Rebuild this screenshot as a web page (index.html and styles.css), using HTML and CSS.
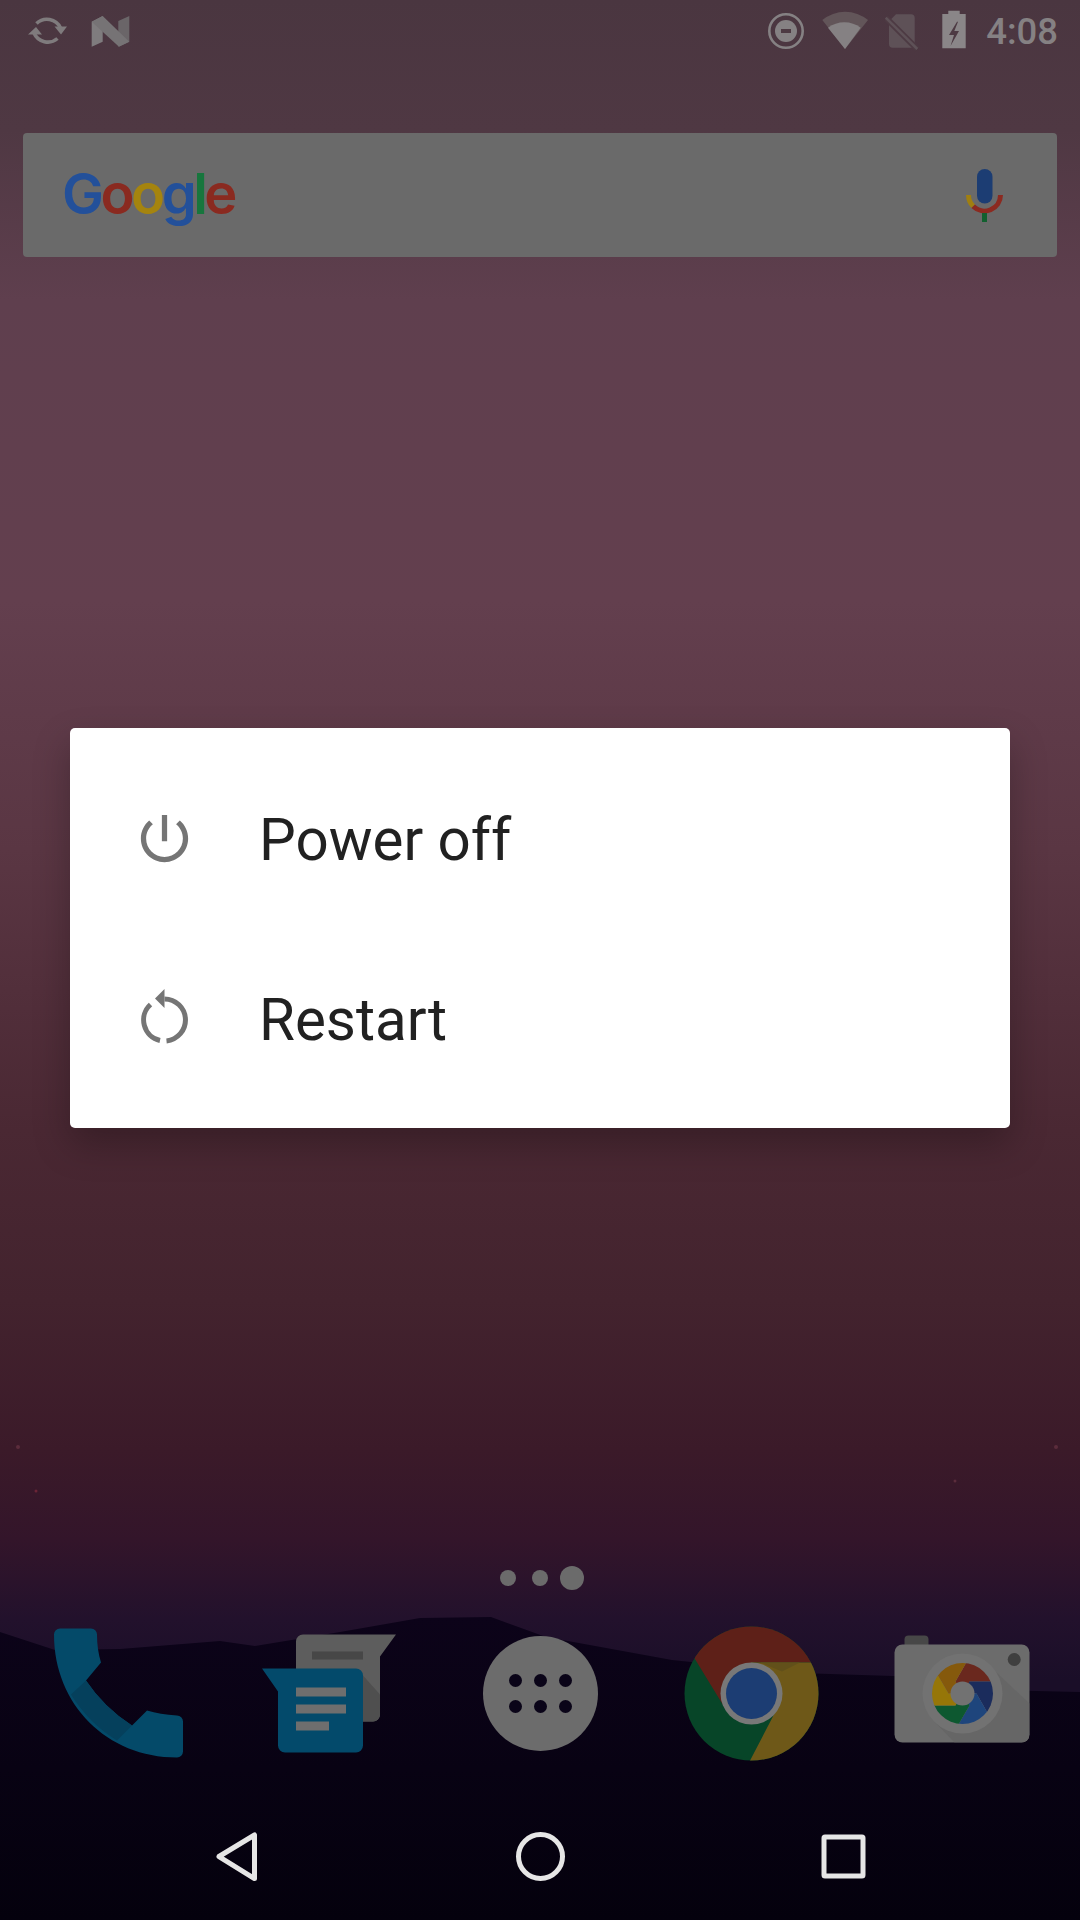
FILE: index.html
```html
<!DOCTYPE html>
<html lang="en">
<head>
    <meta charset="UTF-8">
    <title>Power menu</title>
    <link rel="stylesheet" href="styles.css">
</head>
<body>
    <div class="screen">
        <!-- wallpaper hills, behind everything -->
        <svg class="hills" viewBox="0 0 1080 1920">
            <path d="M0 1632L55 1650L120 1649L220 1641L255 1646L340 1632L420 1618L491 1617L546 1637L672 1660L799 1673L925 1677L1000 1690L1080 1692V1920H0Z" fill="url(#hillFade)"/>
            <defs>
                <linearGradient id="hillFade" x1="0" y1="0" x2="0" y2="1">
                    <stop offset="0" stop-color="#0c0319"/>
                    <stop offset="1" stop-color="#04010d"/>
                </linearGradient>
            </defs>
            <circle cx="18" cy="1447" r="2" fill="#5b2c3c"/>
            <circle cx="1056" cy="1447" r="2" fill="#5b2c3c"/>
            <circle cx="36" cy="1491" r="1.5" fill="#6b2436"/>
            <circle cx="955" cy="1481" r="1.5" fill="#5b2c3c"/>
        </svg>

        <div class="status-bar">
            <div class="status-left">
                <svg class="status-icon" width="39" height="63" viewBox="28 0 39 63">
                    <path d="M36.500 23.500A15 15 0 0 1 60.500 28M57.500 38.500A15 15 0 0 1 34 33" fill="none" stroke="#7f7b7d" stroke-width="3.600"/>
                    <path d="M54.500 26.500H67L61 34.500ZM28 34.500H42L36 27Z" fill="#7f7b7d"/>
                </svg>
                <svg class="status-icon" width="39" height="63" viewBox="91 0 39 63">
                    <path d="M91.700 21.700L102.700 16V41.700L91.700 46.700Z" fill="#7f7c7e"/>
                    <path d="M118.300 21L129.300 16V41.700L118.300 46.700Z" fill="#6a6568"/>
                    <path d="M91.700 21.700L102.700 16L129.300 41.700L119 46.700Z" fill="#767375"/>
                </svg>
            </div>
            <div class="status-right">
                <svg class="status-icon" width="37" height="63" viewBox="769 0 37 63">
                    <circle cx="787" cy="31" r="16.700" fill="none" stroke="#858183" stroke-width="2.600"/>
                    <circle cx="787" cy="31" r="11" fill="#858183"/>
                    <rect x="782" y="29" width="10" height="4" fill="#4d3a43"/>
                </svg>
                <svg class="status-icon" width="46" height="63" viewBox="823 0 46 63">
                    <path d="M846 49L823.300 20A36 36 0 0 1 869 20Z" fill="#625559"/>
                    <path d="M846 49L829 27.700A27 27 0 0 1 861.700 27.700Z" fill="#858183"/>
                </svg>
                <svg class="status-icon" width="34" height="63" viewBox="886 0 34 63">
                    <path d="M897 14.300H912A3.700 3.700 0 0 1 915.700 18V44A3.700 3.700 0 0 1 912 47.700H893.700A3.700 3.700 0 0 1 890 44V21.300Z" fill="#5e5157"/>
                    <path d="M886.700 17.700L918.300 49" stroke="#4d3a43" stroke-width="6"/>
                    <path d="M886.700 17.700L918.300 49" stroke="#5e5157" stroke-width="2.500"/>
                </svg>
                <svg class="status-icon" width="33" height="63" viewBox="937 0 33 63">
                    <path d="M949.300 10.700H960.700V14H966.700V48.300H943.300V14H949.300Z" fill="#8a8688"/>
                    <path d="M958 21.700L950 35H955L951.500 46L960 31H955.300L959 21.700Z" fill="#4d3a43"/>
                </svg>
                <span class="clock">4:08</span>
            </div>
        </div>

        <div class="search-bar">
            <div class="google-logo"><span class="g-blue">G</span><span class="g-red">o</span><span class="g-yellow">o</span><span class="g-blue">g</span><span class="g-green">l</span><span class="g-red">e</span></div>
            <svg class="mic" width="63" height="63" viewBox="953 164 63 63">
                <rect x="977" y="169" width="15.500" height="34.500" rx="7.700" fill="#1c3d73"/>
                <path d="M968.500 195A16 16 0 0 0 973.200 206.300" fill="none" stroke="#a07f10" stroke-width="5"/>
                <path d="M973.200 206.300A16 16 0 0 0 1000.500 195" fill="none" stroke="#8c2a20" stroke-width="5"/>
                <rect x="982" y="213" width="5" height="9" fill="#12602f"/>
            </svg>
        </div>

        <div class="dialog">
            <div class="dialog-row">
                <svg class="row-icon" width="63" height="63" viewBox="0 0 24 24">
                    <path d="M13 3h-2v10h2V3zm4.830 2.170l-1.420 1.420C17.990 7.860 19 9.810 19 12c0 3.870-3.130 7-7 7s-7-3.130-7-7c0-2.190 1.010-4.140 2.580-5.420L6.170 5.170C4.230 6.820 3 9.260 3 12c0 4.970 4.030 9 9 9s9-4.030 9-9c0-2.740-1.230-5.180-3.170-6.830z" fill="#757575"/>
                </svg>
                <span class="row-label">Power off</span>
            </div>
            <div class="dialog-row">
                <svg class="row-icon" width="63" height="63" viewBox="0 0 63 63">
                    <path d="M31.500 12A21 21 0 0 1 33.500 53.900" fill="none" stroke="#757575" stroke-width="5"/>
                    <path d="M27 53.500A21 21 0 0 1 17.500 17.500" fill="none" stroke="#757575" stroke-width="5"/>
                    <path d="M22 11.500L31.500 2V21Z" fill="#757575"/>
                </svg>
                <span class="row-label">Restart</span>
            </div>
        </div>

        <div class="page-dots">
            <span class="dot-cell"><i class="dot"></i></span>
            <span class="dot-cell"><i class="dot"></i></span>
            <span class="dot-cell"><i class="dot dot-active"></i></span>
        </div>

        <div class="dock">
            <!-- phone -->
            <svg width="147" height="147" viewBox="45 1620.500 147 147">
                <path d="M60 1629H91A6 6 0 0 1 97 1635Q97 1650 101 1663L86 1681Q104 1708 132 1726L147 1711Q160 1715 177 1716A6 6 0 0 1 183 1722V1752A6 6 0 0 1 177 1758C107 1758 54 1705 54 1635A6 6 0 0 1 60 1629Z" fill="#044a69"/>
                <path d="M86 1681L71 1695Q89 1724 117 1741L132 1726Q104 1708 86 1681Z" fill="#05405c"/>
            </svg>
            <!-- messenger -->
            <svg width="147" height="147" viewBox="256 1620.500 147 147">
                <path d="M303 1635H396L380 1657V1715A7 7 0 0 1 373 1722H303A7 7 0 0 1 296 1715V1642A7 7 0 0 1 303 1635Z" fill="#5d5d5d"/>
                <rect x="312" y="1652" width="51" height="8" fill="#474747"/>
                <path d="M363 1676L380 1695V1715A7 7 0 0 1 373 1722H363Z" fill="#4f4f4f"/>
                <path d="M262 1669H356A7 7 0 0 1 363 1676V1746A7 7 0 0 1 356 1753H285A7 7 0 0 1 278 1746V1692Z" fill="#034a6b"/>
                <rect x="296" y="1688" width="50" height="9" fill="#6e6e6e"/>
                <rect x="296" y="1705" width="50" height="9" fill="#6e6e6e"/>
                <rect x="296" y="1722" width="33" height="9" fill="#6e6e6e"/>
            </svg>
            <!-- all apps -->
            <svg width="147" height="147" viewBox="466.500 1620.500 147 147">
                <circle cx="540" cy="1694" r="57.500" fill="#6c6c6c"/>
                <g fill="#0a0418">
                    <circle cx="515" cy="1681" r="6.500"/>
                    <circle cx="540" cy="1681" r="6.500"/>
                    <circle cx="565" cy="1681" r="6.500"/>
                    <circle cx="515" cy="1707" r="6.500"/>
                    <circle cx="540" cy="1707" r="6.500"/>
                    <circle cx="565" cy="1707" r="6.500"/>
                </g>
            </svg>
            <!-- chrome -->
            <svg width="147" height="147" viewBox="678 1620.500 147 147">
                <defs>
                    <clipPath id="chromeClip"><circle cx="751.500" cy="1694" r="67"/></clipPath>
                </defs>
                <g clip-path="url(#chromeClip)">
                    <rect x="680" y="1620" width="145" height="145" fill="#074528"/>
                    <path d="M694 1658L680 1620H825V1663H751L727 1712Z" fill="#5e2018"/>
                    <path d="M751 1663H825V1765H748L775 1713Z" fill="#6e5818"/>
                    <path d="M760 1663H800L782 1672Z" fill="#62501a"/>
                </g>
                <circle cx="751.500" cy="1694" r="31" fill="#787878"/>
                <circle cx="751.500" cy="1694" r="25.500" fill="#1c3d73"/>
            </svg>
            <!-- camera -->
            <svg width="147" height="147" viewBox="888.500 1620.500 147 147">
                <defs>
                    <clipPath id="lensClip"><circle cx="962" cy="1694" r="30.500"/></clipPath>
                    <clipPath id="bodyClip"><rect x="894" y="1645" width="135" height="98" rx="8"/></clipPath>
                </defs>
                <rect x="904" y="1636" width="24" height="14" rx="4" fill="#474747"/>
                <rect x="894" y="1645" width="135" height="98" rx="8" fill="#6c6c6c"/>
                <path d="M995 1672L1029 1704V1743H954L930 1718Z" fill="#666" clip-path="url(#bodyClip)"/>
                <circle cx="1013.700" cy="1660" r="6.500" fill="#3f3f3f"/>
                <circle cx="962" cy="1694" r="40" fill="#727272"/>
                <g clip-path="url(#lensClip)">
                    <path d="M979 1640L955 1682L962 1694L969 1682H1020V1640Z" fill="#6a281e"/>
                    <path d="M1020 1682H969L962 1694L976 1694L1000 1736H1020Z" fill="#1b2c5c"/>
                    <path d="M1000 1736L976 1694L962 1694L969 1706L944 1749L1000 1760Z" fill="#1e457c"/>
                    <path d="M944 1749L969 1706L962 1694L955 1706H905V1749Z" fill="#0d5830"/>
                    <path d="M905 1706H955L962 1694L948 1694L924 1653H905Z" fill="#967608"/>
                    <path d="M924 1653L948 1694L962 1694L955 1682L979 1640H924Z" fill="#85590c"/>
                </g>
                <circle cx="962" cy="1694" r="12" fill="#727272"/>
            </svg>
        </div>

        <div class="nav-bar">
            <svg width="63" height="63" viewBox="205 1826 63 63">
                <path d="M219 1857.500L254.500 1836V1879.500Z" fill="none" stroke="#e6e6e6" stroke-width="5" stroke-linejoin="round"/>
            </svg>
            <svg width="63" height="63" viewBox="508 1825.500 63 63">
                <circle cx="539.500" cy="1857" r="22" fill="none" stroke="#e6e6e6" stroke-width="5"/>
            </svg>
            <svg width="63" height="63" viewBox="811.500 1825.500 63 63">
                <rect x="823.500" y="1837.500" width="39" height="39" rx="1" fill="none" stroke="#e6e6e6" stroke-width="5"/>
            </svg>
        </div>
    </div>
</body>
</html>
```
FILE: styles.css
```css
body {
    margin: 0;
    font-family: Roboto, "Liberation Sans", sans-serif;
}
.screen {
    position: relative;
    width: 1080px;
    height: 1920px;
    overflow: hidden;
    background: linear-gradient(to bottom, #4a3640 0, #4f3843 130px, #5f3f4e 300px, #633f4e 600px, #5a3643 850px, #4a2833 1130px, #43232e 1300px, #3b1a29 1450px, #33152a 1540px, #22112c 1620px, #1a0e28 1680px);
}
.hills {
    position: absolute;
    top: 0;
    left: 0;
    width: 1080px;
    height: 1920px;
}
.status-bar, .search-bar, .dialog, .page-dots, .dock, .nav-bar {
    position: relative;
}
.status-bar {
    display: flex;
    justify-content: space-between;
    align-items: center;
    height: 63px;
    padding: 0 22px 0 28px;
}
.status-left {
    display: flex;
    gap: 24px;
}
.status-right {
    display: flex;
    align-items: center;
    gap: 17px;
}
.clock {
    font-size: 36.5px;
    font-weight: 500;
    color: #858183;
}
.search-bar {
    display: flex;
    justify-content: space-between;
    align-items: center;
    height: 124px;
    margin: 70px 23px 0;
    padding: 0 41px 0 39px;
    background-color: #6a6a6a;
    border-radius: 4px;
}
.google-logo {
    margin-bottom: 2px;
    font-family: Inter, sans-serif;
    font-size: 56px;
    font-weight: 600;
    letter-spacing: -3.5px;
}
.g-blue { color: #23509a; }
.g-red { color: #8a2a20; }
.g-yellow { color: #a5840e; }
.g-green { color: #17763d; }
.dialog {
    height: 360px;
    margin: 471px 70px 0;
    padding: 20px 0;
    background-color: #fff;
    border-radius: 5px;
    box-shadow: 0 16px 36px rgba(0, 0, 0, 0.25);
}
.dialog-row {
    display: flex;
    align-items: center;
    height: 180px;
    padding-left: 63px;
}
.row-icon {
    margin-right: 63px;
}
.row-label {
    padding-top: 4px;
    font-size: 58.3px;
    color: #212121;
}
.page-dots {
    display: flex;
    justify-content: center;
    align-items: center;
    height: 24px;
    margin-top: 438px;
}
.dot-cell {
    display: flex;
    justify-content: center;
    width: 32px;
}
.dot {
    width: 16px;
    height: 16px;
    background-color: #6b6b6b;
    border-radius: 50%;
}
.dot-active {
    width: 24px;
    height: 24px;
}
.dock {
    display: grid;
    grid-template-columns: repeat(5, 211px);
    justify-items: center;
    margin-top: 30px;
    padding: 0 12.5px;
}
.nav-bar {
    display: grid;
    grid-template-columns: repeat(3, 303.5px);
    justify-items: center;
    align-items: center;
    height: 126px;
    margin-top: 26px;
    padding: 0 85px;
}
svg {
    display: block;
}
```
